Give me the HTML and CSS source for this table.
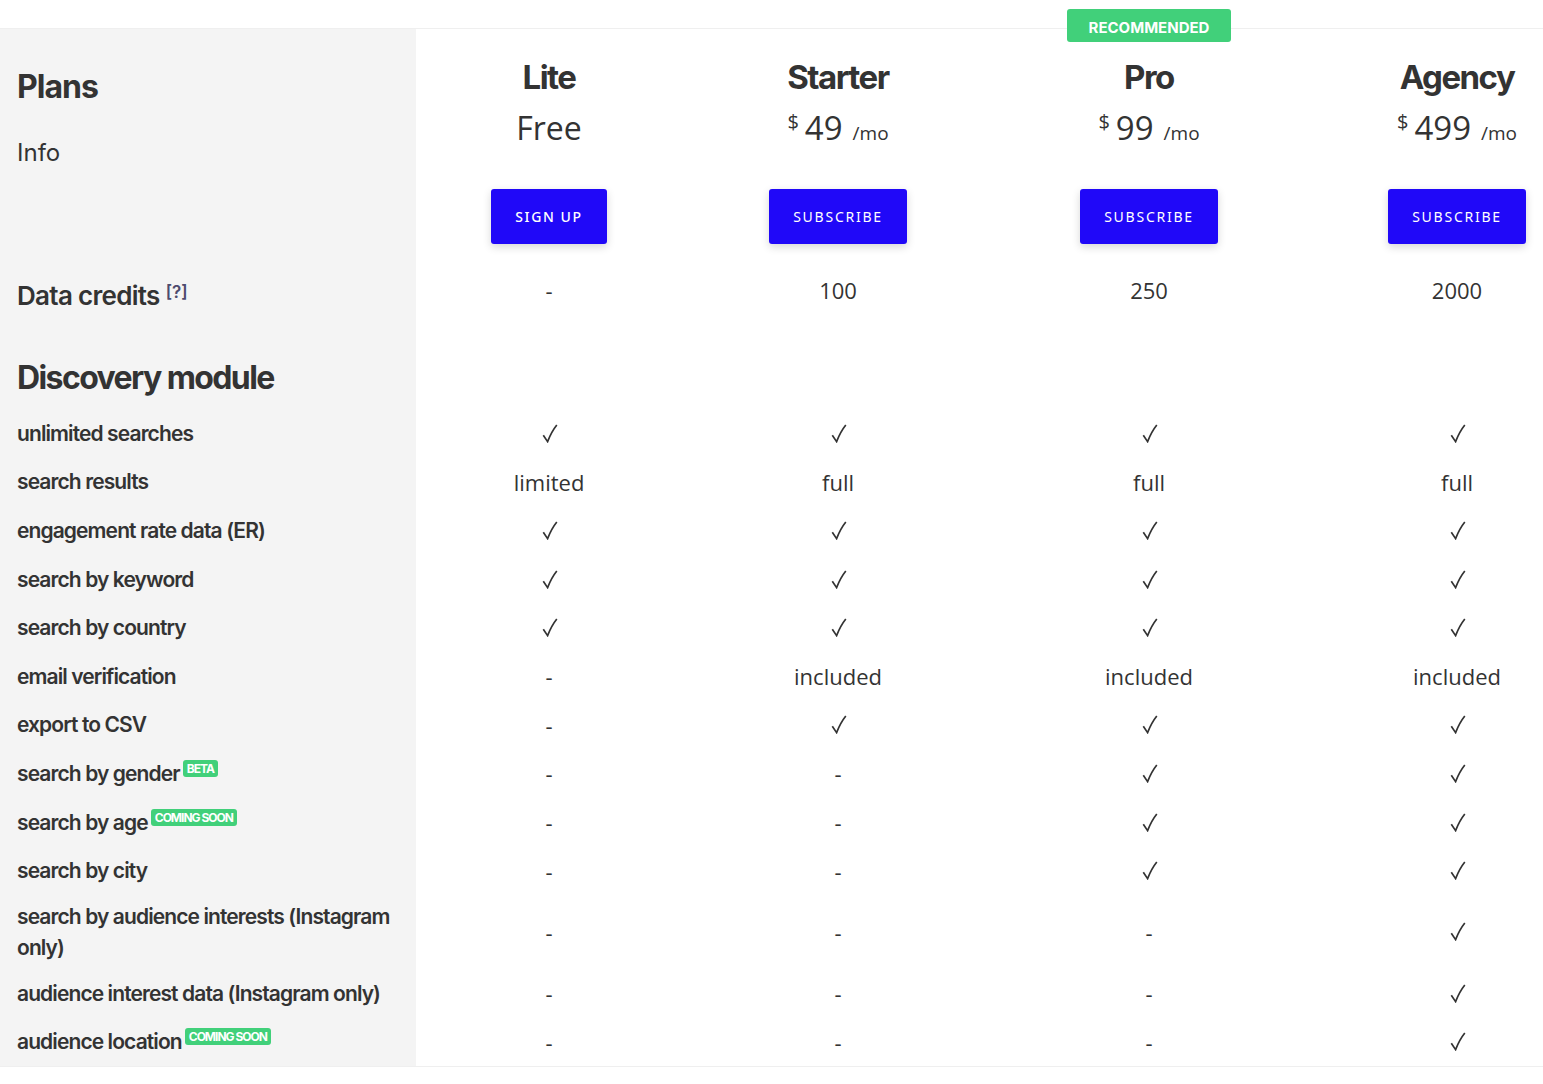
FILE: index.html
```html
<!DOCTYPE html>
<html lang="en">
<head>
<meta charset="utf-8">
<title>Plans</title>
<link rel="stylesheet" href="styles.css">
</head>
<body>
<svg class="defs" width="0" height="0" aria-hidden="true">
  <symbol id="chk" viewBox="0 0 16 19">
    <path d="M1.3 11.2 L5.6 17.6 C8 11.5 10.8 6 14.8 1" fill="none" stroke="#333333" stroke-width="1.7" stroke-linejoin="miter" stroke-linecap="butt"/>
  </symbol>
</svg>
<div class="pricing">
  <div class="row head-row">
    <div class="label-cell head-label">
      <h1 class="plans-title">Plans</h1>
      <div class="plans-info">Info</div>
    </div>
    <div class="plan">
      <div class="plan-name">Lite</div>
      <div class="plan-price free">Free</div>
      <a class="btn btn-signup">SIGN UP</a>
    </div>
    <div class="plan">
      <div class="plan-name">Starter</div>
      <div class="plan-price"><span class="cur">$</span><span class="amt">49</span><span class="per">/mo</span></div>
      <a class="btn">SUBSCRIBE</a>
    </div>
    <div class="plan">
      <span class="recommended">RECOMMENDED</span>
      <div class="plan-name">Pro</div>
      <div class="plan-price"><span class="cur">$</span><span class="amt">99</span><span class="per">/mo</span></div>
      <a class="btn">SUBSCRIBE</a>
    </div>
    <div class="plan">
      <div class="plan-name">Agency</div>
      <div class="plan-price"><span class="cur">$</span><span class="amt">499</span><span class="per">/mo</span></div>
      <a class="btn">SUBSCRIBE</a>
    </div>
  </div>

  <div class="row credits-row">
    <div class="label-cell credits-label">Data credits<sup class="help">[?]</sup></div>
    <div class="val">-</div>
    <div class="val">100</div>
    <div class="val">250</div>
    <div class="val">2000</div>
  </div>

  <div class="row module-row">
    <div class="label-cell module-label">Discovery module</div>
    <div></div><div></div><div></div><div></div>
  </div>

  <div class="row feat">
    <div class="label-cell">unlimited searches</div>
    <div class="val"><svg class="chk"><use href="#chk"/></svg></div><div class="val"><svg class="chk"><use href="#chk"/></svg></div><div class="val"><svg class="chk"><use href="#chk"/></svg></div><div class="val"><svg class="chk"><use href="#chk"/></svg></div>
  </div>
  <div class="row feat">
    <div class="label-cell">search results</div>
    <div class="val">limited</div><div class="val">full</div><div class="val">full</div><div class="val">full</div>
  </div>
  <div class="row feat">
    <div class="label-cell">engagement rate data (ER)</div>
    <div class="val"><svg class="chk"><use href="#chk"/></svg></div><div class="val"><svg class="chk"><use href="#chk"/></svg></div><div class="val"><svg class="chk"><use href="#chk"/></svg></div><div class="val"><svg class="chk"><use href="#chk"/></svg></div>
  </div>
  <div class="row feat">
    <div class="label-cell">search by keyword</div>
    <div class="val"><svg class="chk"><use href="#chk"/></svg></div><div class="val"><svg class="chk"><use href="#chk"/></svg></div><div class="val"><svg class="chk"><use href="#chk"/></svg></div><div class="val"><svg class="chk"><use href="#chk"/></svg></div>
  </div>
  <div class="row feat">
    <div class="label-cell">search by country</div>
    <div class="val"><svg class="chk"><use href="#chk"/></svg></div><div class="val"><svg class="chk"><use href="#chk"/></svg></div><div class="val"><svg class="chk"><use href="#chk"/></svg></div><div class="val"><svg class="chk"><use href="#chk"/></svg></div>
  </div>
  <div class="row feat">
    <div class="label-cell">email verification</div>
    <div class="val">-</div><div class="val">included</div><div class="val">included</div><div class="val">included</div>
  </div>
  <div class="row feat">
    <div class="label-cell">export to CSV</div>
    <div class="val">-</div><div class="val"><svg class="chk"><use href="#chk"/></svg></div><div class="val"><svg class="chk"><use href="#chk"/></svg></div><div class="val"><svg class="chk"><use href="#chk"/></svg></div>
  </div>
  <div class="row feat">
    <div class="label-cell"><span>search by gender<span class="tag">BETA</span></span></div>
    <div class="val">-</div><div class="val">-</div><div class="val"><svg class="chk"><use href="#chk"/></svg></div><div class="val"><svg class="chk"><use href="#chk"/></svg></div>
  </div>
  <div class="row feat">
    <div class="label-cell"><span>search by age<span class="tag">COMING SOON</span></span></div>
    <div class="val">-</div><div class="val">-</div><div class="val"><svg class="chk"><use href="#chk"/></svg></div><div class="val"><svg class="chk"><use href="#chk"/></svg></div>
  </div>
  <div class="row feat">
    <div class="label-cell">search by city</div>
    <div class="val">-</div><div class="val">-</div><div class="val"><svg class="chk"><use href="#chk"/></svg></div><div class="val"><svg class="chk"><use href="#chk"/></svg></div>
  </div>
  <div class="row feat">
    <div class="label-cell">search by audience interests (Instagram only)</div>
    <div class="val">-</div><div class="val">-</div><div class="val">-</div><div class="val"><svg class="chk"><use href="#chk"/></svg></div>
  </div>
  <div class="row feat">
    <div class="label-cell">audience interest data (Instagram only)</div>
    <div class="val">-</div><div class="val">-</div><div class="val">-</div><div class="val"><svg class="chk"><use href="#chk"/></svg></div>
  </div>
  <div class="row feat">
    <div class="label-cell"><span>audience location<span class="tag">COMING SOON</span></span></div>
    <div class="val">-</div><div class="val">-</div><div class="val">-</div><div class="val"><svg class="chk"><use href="#chk"/></svg></div>
  </div>
</div>
</body>
</html>
```

FILE: styles.css
```css
html, body {
  margin: 0;
  padding: 0;
  background: #ffffff;
  overflow: hidden;
}
body {
  padding-top: 28px;
  color: #333333;
  font-family: "Open Sans", "Noto Sans", sans-serif;
}
.defs {
  position: absolute;
  width: 0;
  height: 0;
  overflow: hidden;
}
.pricing {
  width: 1610px;
  border-top: 1px solid #efefef;
  border-bottom: 1px solid #efefef;
}
.row {
  display: grid;
  grid-template-columns: 416px 266px 312px 310px 306px;
}
.label-cell {
  background: #f4f4f4;
  padding: 0 20px 0 17px;
  font-family: Inter, "Noto Sans", sans-serif;
  color: #333333;
  box-sizing: border-box;
}

/* header */
.head-row {
  height: 236px;
}
.head-label {
  padding-top: 39px;
}
.plans-title {
  margin: 0;
  font-size: 32px;
  line-height: 38px;
  font-weight: 700;
  letter-spacing: -1px;
}
.plans-info {
  margin-top: 32px;
  font-size: 24px;
  line-height: 30px;
  font-weight: 400;
}
.plan {
  position: relative;
  display: flex;
  flex-direction: column;
  align-items: center;
  padding-top: 29px;
}
.plan-name {
  font-family: Inter, "Noto Sans", sans-serif;
  font-size: 33px;
  line-height: 38px;
  font-weight: 700;
  letter-spacing: -1.5px;
}
.plan-price {
  margin-top: 13px;
  height: 38px;
  display: flex;
  align-items: baseline;
  line-height: 38px;
}
.free {
  font-size: 32px;
}
.cur {
  font-size: 20px;
  align-self: flex-start;
  line-height: 26px;
  margin-right: 6px;
}
.amt {
  font-size: 33px;
}
.per {
  font-size: 19px;
  margin-left: 10px;
}
.btn {
  margin-top: 42px;
  height: 55px;
  box-sizing: border-box;
  display: flex;
  align-items: center;
  justify-content: center;
  padding: 0 24px;
  background: #2008f8;
  color: #ffffff;
  border-radius: 3px;
  box-shadow: 0 3px 8px rgba(0, 0, 0, 0.16);
  font-family: "Noto Sans", "Open Sans", sans-serif;
  font-size: 14px;
  letter-spacing: 1.75px;
  font-weight: 400;
}
.btn-signup {
  font-weight: 500;
  letter-spacing: 1.6px;
}
.recommended {
  position: absolute;
  top: -20px;
  left: 50%;
  transform: translateX(-50%);
  width: 164px;
  height: 33px;
  padding-top: 3px;
  box-sizing: border-box;
  display: flex;
  align-items: center;
  justify-content: center;
  background: #41d07a;
  color: #ffffff;
  border-radius: 3px;
  font-family: Inter, "Noto Sans", sans-serif;
  font-weight: 700;
  font-size: 15px;
}

/* values */
.val {
  display: flex;
  align-items: center;
  justify-content: center;
  font-size: 22px;
  color: #333333;
}
.chk {
  width: 16px;
  height: 19px;
  margin-left: 1px;
}

/* credits */
.credits-row {
  height: 50px;
}
.credits-label {
  display: flex;
  align-items: center;
  font-size: 26px;
  font-weight: 600;
  letter-spacing: -0.7px;
  padding-top: 10px;
}
.help {
  font-size: 17px;
  font-weight: 600;
  color: #4d4b6e;
  margin-left: 6px;
  align-self: flex-start;
  line-height: 20px;
  margin-top: 7px;
  letter-spacing: 0;
}

/* module */
.module-row {
  height: 94px;
}
.module-label {
  padding-top: 44px;
  font-size: 32px;
  line-height: 38px;
  font-weight: 700;
  letter-spacing: -1.6px;
}

/* features */
.feat {
  min-height: 48.6px;
}
.feat .label-cell {
  display: flex;
  align-items: center;
  padding-top: 6px;
  padding-bottom: 6px;
  font-size: 21px;
  line-height: 31px;
  font-weight: 600;
  letter-spacing: -0.9px;
}
.tag {
  display: inline-block;
  vertical-align: 8px;
  margin-left: 3px;
  padding: 0 4px;
  height: 17px;
  line-height: 17px;
  background: #41d07a;
  color: #ffffff;
  border-radius: 3px;
  font-size: 12px;
  font-weight: 700;
  letter-spacing: -1px;
}
```
